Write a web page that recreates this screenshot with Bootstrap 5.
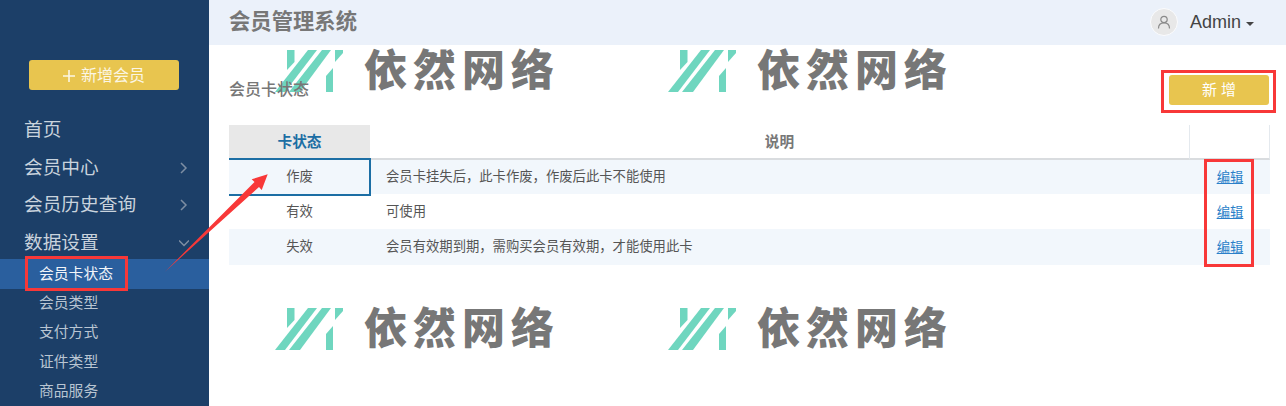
<!DOCTYPE html>
<html lang="zh">
<head>
<meta charset="utf-8">
<title>会员卡状态</title>
<link href="https://cdn.jsdelivr.net/npm/bootstrap@5.3.0/dist/css/bootstrap.min.css" rel="stylesheet">
<style>
html,body{height:100%;overflow:hidden}
body{font-family:"Liberation Sans","Noto Sans CJK SC",sans-serif;background:#fff}
.frame{height:406px;position:relative}
.side{width:209px;flex:none;background:#1c3f68;padding-top:60px;color:#c9d3dd}
.add-member{display:flex;align-items:center;justify-content:center;gap:6px;width:150px;height:30px;margin:0 0 22px 29px;padding:2px 0 0;background:#e8c54f;border:0;border-radius:3px;color:#fbf6e4;font-size:16px}
.add-member svg{width:12px;height:12px}
.menu-top{display:flex;align-items:center;justify-content:space-between;height:37.4px;padding:0 20px 0 24px;font-size:18.7px;line-height:1}
.menu-top svg{width:10px;height:14px}
.menu-list{margin-bottom:-2.500px}
.menu-sub{height:29.4px;line-height:29.4px;padding-left:39px;font-size:14.8px;color:#b9c5d2}
.menu-sub.on{height:30px;line-height:30px;background:#2a5f9e;color:#f2f5f9}
.main-pane{flex:1;min-width:0;position:relative}
.topbar{height:45px;background:#ebf1fa;padding:0 32px 0 20px}
.brand-name{font-size:21.33px;font-weight:700;color:#777}
.avatar{width:28px;height:28px;border-radius:50%;background:#e8e8e8;border:1px solid #fbfcfe;margin-right:12px;margin-top:-1px}
.avatar svg{width:14px;height:14px;display:block}
.admin{font-size:18px;color:#444}
.caret-mark{display:inline-block;width:0;height:0;margin-left:5px;vertical-align:2px;border-top:4px solid #444;border-left:4px solid transparent;border-right:4px solid transparent}
.content{position:relative;padding:20px 16px 0 20px}
.heading-row{height:50px;margin-bottom:10px}
.page-title{font-size:16px;color:#777;margin:0}
.add-btn{width:100px;height:30px;padding:0;margin-right:1px;background:#e8c54f;border:0;border-radius:3px;color:#fff;font-size:15px;line-height:30px}
.status-table{width:1041px;margin:0;border-collapse:separate;border-spacing:0;table-layout:fixed;font-size:13.33px;color:#555}
.status-table th,.status-table td{padding:0;vertical-align:middle;border:0;background:transparent;box-shadow:none}
.status-table th{height:35px;font-size:14.67px;font-weight:700;color:#777;text-align:center;border-bottom:2px solid #d9dcdf;border-right:1px solid #e4e9ee}
.status-table th:first-child{background:#e8e8e8;color:#1c6ea4;border-right:0}
.status-table td{height:35px;text-align:center}
.status-table td:last-child{padding-top:2px}
.status-table tbody tr:first-child td{height:34px}
.status-table tbody tr:last-child td{height:36px}
.status-table td.desc{text-align:left;padding-left:16px}
.status-table tr.band td{background:#f2f7fc}
.picked{position:relative}
.picked::after{content:"";position:absolute;inset:-2px -1px -2px 0;border:2px solid #1c6ea4;border-left:0}
.edit-link{font-size:13.33px;color:#2a7fc9}
.mark-logo,.mark-text{position:absolute}
.mark-logo{width:68px;height:42px}
.mark-text{font-size:43px;line-height:42px;font-weight:900;color:#777;letter-spacing:6px;white-space:nowrap}
.red-box{position:absolute;border:3px solid #f83838;pointer-events:none}
.arrow{position:absolute;left:0;top:0;width:1286px;height:406px;pointer-events:none}
</style>
</head>
<body>
<svg width="0" height="0" class="position-absolute">
<symbol id="yr" viewBox="0 0 68 42">
<g fill="#6fd6bf">
<polygon points="12,0 19.500,0 19.500,12 12,20"/>
<polygon points="33,0 42,0 10,42 0,42"/>
<polygon points="47,0 56,0 25,42 14,42"/>
<polygon points="51,26 58,18 58,42 51,42"/>
<polygon points="60,0 68,0 68,3 60,12"/>
</g>
</symbol>
</svg>
<div class="frame d-flex overflow-hidden">
<aside class="side">
<button class="add-member" type="button"><svg viewBox="0 0 12 12"><path d="M6 0v12M0 6h12" stroke="#fbf6e4" stroke-width="1.6" fill="none"/></svg>新增会员</button>
<ul class="list-unstyled menu-list">
<li class="menu-top">首页</li>
<li class="menu-top">会员中心<svg viewBox="0 0 10 14"><path d="M2 2l5 5-5 5" stroke="#7d8ea3" stroke-width="1.5" fill="none"/></svg></li>
<li class="menu-top">会员历史查询<svg viewBox="0 0 10 14"><path d="M2 2l5 5-5 5" stroke="#7d8ea3" stroke-width="1.5" fill="none"/></svg></li>
<li class="menu-top">数据设置<svg viewBox="0 0 10 14"><path d="M0 4.5l5 5 5-5" stroke="#7d8ea3" stroke-width="1.5" fill="none"/></svg></li>
</ul>
<ul class="list-unstyled mb-0">
<li class="menu-sub on">会员卡状态</li>
<li class="menu-sub">会员类型</li>
<li class="menu-sub">支付方式</li>
<li class="menu-sub">证件类型</li>
<li class="menu-sub">商品服务</li>
</ul>
</aside>
<main class="main-pane">
<svg class="mark-logo" style="left:66px;top:50px"><use href="#yr"/></svg>
<span class="mark-text" style="left:155px;top:50px">依然网络</span>
<svg class="mark-logo" style="left:459px;top:50px"><use href="#yr"/></svg>
<span class="mark-text" style="left:548px;top:50px">依然网络</span>
<svg class="mark-logo" style="left:66px;top:308px"><use href="#yr"/></svg>
<span class="mark-text" style="left:155px;top:308px">依然网络</span>
<svg class="mark-logo" style="left:459px;top:308px"><use href="#yr"/></svg>
<span class="mark-text" style="left:548px;top:308px">依然网络</span>
<header class="topbar d-flex align-items-center justify-content-between">
<span class="brand-name">会员管理系统</span>
<div class="d-flex align-items-center">
<span class="avatar d-flex align-items-center justify-content-center"><svg viewBox="0 0 14 14"><circle cx="7" cy="4.5" r="3.2" fill="none" stroke="#8a8a8a" stroke-width="1.2"/><path d="M1.5 13.5c0-3.5 2.3-5.6 5.5-5.6s5.500 2.100 5.500 5.600" fill="none" stroke="#8a8a8a" stroke-width="1.2"/></svg></span>
<span class="admin">Admin<i class="caret-mark"></i></span>
</div>
</header>
<section class="content">
<div class="heading-row d-flex align-items-center justify-content-between">
<h1 class="page-title">会员卡状态</h1>
<button class="add-btn" type="button">新 增</button>
</div>
<table class="table status-table">
<colgroup><col style="width:141px"><col style="width:820px"><col style="width:80px"></colgroup>
<thead><tr><th>卡状态</th><th>说明</th><th></th></tr></thead>
<tbody>
<tr class="band"><td class="picked">作废</td><td class="desc">会员卡挂失后，此卡作废，作废后此卡不能使用</td><td><a class="edit-link" href="#">编辑</a></td></tr>
<tr><td>有效</td><td class="desc">可使用</td><td><a class="edit-link" href="#">编辑</a></td></tr>
<tr class="band"><td>失效</td><td class="desc">会员有效期到期，需购买会员有效期，才能使用此卡</td><td><a class="edit-link" href="#">编辑</a></td></tr>
</tbody>
</table>
</section>
</main>
<span class="red-box" style="left:25px;top:256px;width:103px;height:35px"></span>
<span class="red-box" style="left:1161px;top:70px;width:115px;height:43px"></span>
<span class="red-box" style="left:1204px;top:159px;width:50px;height:108px"></span>
<svg class="arrow" viewBox="0 0 1286 406"><polygon points="165,271.700 254.500,182 251.700,179.300 267.700,174.300 261.700,190 259,187" fill="#f83838"/></svg>
</div>
<script src="https://cdn.jsdelivr.net/npm/bootstrap@5.3.0/dist/js/bootstrap.bundle.min.js"></script>
</body>
</html>
